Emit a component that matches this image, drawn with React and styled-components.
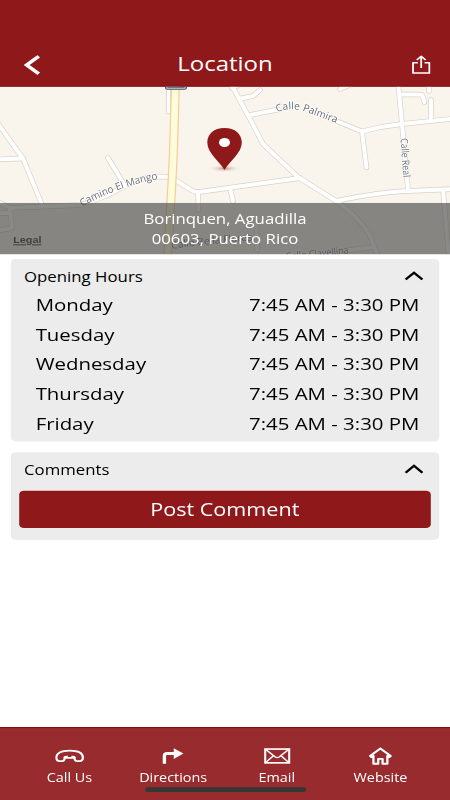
import styled, { createGlobalStyle } from "styled-components";

const hours = [
	{ day: "Monday", time: "7:45 AM - 3:30 PM" },
	{ day: "Tuesday", time: "7:45 AM - 3:30 PM" },
	{ day: "Wednesday", time: "7:45 AM - 3:30 PM" },
	{ day: "Thursday", time: "7:45 AM - 3:30 PM" },
	{ day: "Friday", time: "7:45 AM - 3:30 PM" },
];

const roads = [
	"M-4 121L23 158.5L42 205",
	"M-4 159.5L23 158.5",
	"M-4 201L10 208L80 205Q100 200 125 186Q140 178 157 176.5L172 177",
	"M108 158L125 186",
	"M-4 213.500L10 213",
	"M10 208L12 228L-4 231",
	"M172 178L191 190Q194 192.500 199 192L300 178",
	"M198 192L198.500 210",
	"M230 188L233 201",
	"M231 84L250 119L263 144L298 177L336 201Q352 212 360 222Q371 234 373 244L380 260",
	"M232 88L239 85",
	"M241 98.500L253 96L260 90",
	"M250 115L278 109.500",
	"M334 120L362 131.500Q382 126 402 124L456 118.500",
	"M362 131.500L366.500 167.500",
	"M398 82L402 124L408 190",
	"M400 94.500L420 94.500Q422 94.500 422.500 96L424.500 102",
	"M428.500 82L429 91",
	"M431 100L431 120",
	"M340 89L352 84",
	"M336 201Q380 192 408 191L456 189",
	"M443 190L449 258",
	"M256.500 222L257 250",
	"M346 250.500L374 247",
];

const Chevron = () => (
	<svg width="16" height="10" viewBox="0 0 16 10" fill="none">
		<path d="M1 8.800L8 1.800L15 8.800" stroke="#000" strokeWidth="2.100" />
	</svg>
);

const LocationMap = () => (
	<MapSvg viewBox="0 86.700 450 167.500" preserveAspectRatio="none">
		<defs>
			<path id="camino" d="M82 206.500Q120 186 158 179" />
			<path id="palmira" d="M277 112.500Q291 106.500 305 111.500L340 124.500" />
			<path id="real" d="M400.500 138.500L403.500 180" />
			<path id="bella" d="M172 249Q205 244 256 240" />
			<path id="clavellina" d="M286 260Q320 257 352 253" />
			<radialGradient id="shade">
				<stop offset="0" stopColor="#c98f87" />
				<stop offset="1" stopColor="#f9f4ec" stopOpacity="0" />
			</radialGradient>
		</defs>
		<rect y="86" width="450" height="170" fill="#f9f4ec" />
		<g fill="none" strokeLinecap="round" strokeLinejoin="round">
			<path d="M168.500 82V112" stroke="#d9d4cb" strokeWidth="4.800" />
			<path d="M168.500 82V112" stroke="#fff" strokeWidth="3.200" />
			{roads.map((d) => (
				<path key={d} d={d} stroke="#d9d3c9" strokeWidth="5.400" />
			))}
			{roads.map((d) => (
				<path key={d} d={d} stroke="#fff" strokeWidth="4" />
			))}
			<path
				d="M175.500 82L173.500 150L172 182L167.500 258"
				stroke="#f3cd9c"
				strokeWidth="9"
			/>
			<path
				d="M175.500 82L173.500 150L172 182L167.500 258"
				stroke="#fffcd9"
				strokeWidth="6.600"
			/>
		</g>
		<rect
			x="165.500"
			y="80"
			width="21"
			height="9.300"
			rx="2"
			fill="#3159c4"
			stroke="#3159c4"
			strokeWidth="1"
		/>
		<path d="M167 86V88.300H185V86" fill="none" stroke="#f2d43c" strokeWidth="1" />
		<MapLabel>
			<textPath href="#camino" textLength="81" lengthAdjust="spacingAndGlyphs">
				Camino El Mango
			</textPath>
		</MapLabel>
		<MapLabel>
			<textPath href="#palmira" textLength="62" lengthAdjust="spacingAndGlyphs">
				Calle Palmira
			</textPath>
		</MapLabel>
		<MapLabel>
			<textPath href="#real" textLength="39" lengthAdjust="spacingAndGlyphs">
				Calle Real
			</textPath>
		</MapLabel>
		<MapLabel>
			<textPath href="#bella" textLength="81" lengthAdjust="spacingAndGlyphs">
				Calle Bella Flores
			</textPath>
		</MapLabel>
		<MapLabel>
			<textPath href="#clavellina" textLength="63" lengthAdjust="spacingAndGlyphs">
				Calle Clavellina
			</textPath>
		</MapLabel>
		<ellipse cx="224.500" cy="168.500" rx="17" ry="4" fill="url(#shade)" />
		<path
			d="M224.500 170C219 160.500 207.300 153 207.300 142.500C207.300 134 214 128 224.500 128S241.800 134 241.800 142.500C241.800 153 230 160.500 224.500 170Z"
			fill="#8e181a"
		/>
		<ellipse cx="224.500" cy="142.500" rx="5.500" ry="4.600" fill="#fff" />
	</MapSvg>
);

const PhoneIcon = () => (
	<svg width="24" height="20" viewBox="0 0 24 20" fill="none">
		<path
			d="M.9 11.200C.9 6.200 5 4 12 4S23.100 6.200 23.100 11.200C23.100 13.600 22 14.500 20.300 14.500H18.300C16.700 14.500 16.200 13.400 16.200 12V10.700C15.800 10.100 15 9.900 14.400 9.900V11.200H9.600V9.900C9 9.900 8.200 10.100 7.800 10.700V12C7.800 13.400 7.300 14.500 5.700 14.500H3.700C2 14.500 .9 13.600 .9 11.200Z"
			stroke="#fff"
			strokeWidth="1.800"
		/>
	</svg>
);

const TurnIcon = () => (
	<svg width="24" height="20" viewBox="0 0 24 20">
		<path
			d="M5 17.200V9Q5 6.800 7.200 6.800H13.500"
			fill="none"
			stroke="#fff"
			strokeWidth="2.800"
		/>
		<path d="M12.800 1.500L20.800 6.900L12.800 12.300Z" fill="#fff" />
	</svg>
);

const MailIcon = () => (
	<svg width="24" height="20" viewBox="0 0 24 20" fill="none" stroke="#fff">
		<rect x="2" y="2.300" width="20" height="14" strokeWidth="1.700" />
		<path
			d="M2.500 2.800L10.400 10.400Q12 11.600 13.600 10.400L21.500 2.800M2.500 15.800L8.800 9M21.500 15.800L15.200 9"
			strokeWidth="1.400"
		/>
	</svg>
);

const HomeIcon = () => (
	<svg width="24" height="20" viewBox="0 0 24 20" fill="none">
		<path
			d="M12 1.800L3.400 9.300L4.500 10.500L6.200 9.200V17.200H10.200V12.300H13.800V17.200H17.800V9.200L19.500 10.500L20.600 9.300Z"
			stroke="#fff"
			strokeWidth="1.900"
			strokeLinejoin="round"
		/>
	</svg>
);

const tabs = [
	{ label: "Call Us", Icon: PhoneIcon },
	{ label: "Directions", Icon: TurnIcon },
	{ label: "Email", Icon: MailIcon },
	{ label: "Website", Icon: HomeIcon },
];

export default function App() {
	return (
		<Viewport>
			<GlobalStyle />
			<Screen>
				<Header>
					<svg width="14" height="20" viewBox="0 0 14 20" fill="none">
						<path d="M12.300 1.100L2.200 10L12.300 18.900" stroke="#fff" strokeWidth="3.200" />
					</svg>
					<Title>Location</Title>
					<svg width="16" height="20" viewBox="0 0 16 20" fill="none">
						<path
							d="M5.200 7.700H1.200V18H14.800V7.700H10.800M8 13V1.500M4.300 5L8 1.200L11.700 5"
							stroke="#fff"
							strokeWidth="1.500"
						/>
					</svg>
				</Header>
				<MapArea>
					<LocationMap />
					<AddressBar>
						<span>Borinquen, Aguadilla</span>
						<span>00603, Puerto Rico</span>
						<Legal>Legal</Legal>
					</AddressBar>
				</MapArea>
				<Cards>
					<Card>
						<CardHeader>
							Opening Hours
							<Chevron />
						</CardHeader>
						{hours.map(({ day, time }) => (
							<HoursRow key={day}>
								<span>{day}</span>
								<span>{time}</span>
							</HoursRow>
						))}
					</Card>
					<Card>
						<CardHeader>
							Comments
							<Chevron />
						</CardHeader>
						<PostButton>Post Comment</PostButton>
					</Card>
				</Cards>
				<TabBar>
					{tabs.map(({ label, Icon }) => (
						<Tab key={label}>
							<Icon />
							{label}
						</Tab>
					))}
					<HomeIndicator />
				</TabBar>
			</Screen>
		</Viewport>
	);
}

const GlobalStyle = createGlobalStyle`
	* {
		box-sizing: border-box;
	}
	body {
		margin: 0;
		background-color: #fff;
		font-family: "Open Sans", sans-serif;
	}
`;

const Viewport = styled.div`
	width: 450px;
	height: 800px;
	overflow: hidden;
`;

/* 375x812 layout stretched over the 450x800 viewport */
const Screen = styled.div`
	display: flex;
	flex-direction: column;
	width: 375px;
	height: 812px;
	transform: scale(1.2, 0.98522);
	transform-origin: 0 0;
`;

const Header = styled.header`
	display: flex;
	justify-content: space-between;
	align-items: center;
	height: 88px;
	padding: 44px 16px 0 20px;
	background-color: #8e181a;
	border-bottom: 1px solid #850c0e;
`;

const Title = styled.h1`
	margin: 0;
	padding: 0 2px 2px 0;
	font-size: 20px;
	font-weight: 400;
	line-height: 40px;
	color: #fff;
`;

const MapArea = styled.section`
	position: relative;
	height: 170px;
	overflow: hidden;
`;

const MapSvg = styled.svg`
	display: block;
	width: 100%;
	height: 100%;
`;

const MapLabel = styled.text`
	font-size: 10.2px;
	fill: #6c6f75;
	stroke: #fff;
	stroke-width: 1.6px;
	paint-order: stroke;
`;

const AddressBar = styled.div`
	position: absolute;
	inset: auto 0 0;
	display: flex;
	flex-direction: column;
	align-items: center;
	height: 52px;
	padding-top: 5px;
	background-color: rgba(76, 76, 73, 0.66);
	font-size: 14px;
	line-height: 21px;
	color: #fff;
`;

const Legal = styled.span`
	position: absolute;
	left: 11px;
	bottom: 8px;
	font: bold 9px/12px "Liberation Sans", sans-serif;
	color: #3f3f3d;
	text-decoration: underline;
`;

const Cards = styled.main`
	display: flex;
	flex-direction: column;
	flex: 1;
	gap: 11px;
	padding: 5px 9.5px 0 9.2px;
`;

const Card = styled.section`
	padding-bottom: 4px;
	background-color: #ececec;
	border-radius: 4px;
`;

const CardHeader = styled.div`
	display: flex;
	justify-content: space-between;
	align-items: center;
	height: 31px;
	padding: 3px 13px 0 10.8px;
	font-size: 14px;
	color: #000;
`;

const HoursRow = styled.div`
	display: flex;
	justify-content: space-between;
	align-items: center;
	height: 30px;
	padding: 0 16px 0 20.5px;
	font-size: 17px;
	color: #000;
`;

const PostButton = styled.button`
	display: block;
	width: calc(100% - 13.6px);
	height: 38px;
	margin: 7.5px 6.8px 8.5px;
	padding: 0;
	background-color: #8e181a;
	border: 0;
	border-radius: 4px;
	font: 18px "Open Sans", sans-serif;
	color: #fff;
`;

const TabBar = styled.nav`
	position: relative;
	display: flex;
	justify-content: center;
	height: 74px;
	padding-top: 19px;
	background-color: #982b2e;
	border-top: 1px solid #850c0e;
`;

const Tab = styled.div`
	display: flex;
	flex-direction: column;
	align-items: center;
	gap: 4px;
	width: 86.4px;
	font-size: 12px;
	line-height: 16px;
	color: #fff;
`;

const HomeIndicator = styled.div`
	position: absolute;
	left: 120.6px;
	bottom: 8px;
	width: 134px;
	height: 5px;
	background-color: #363636;
	border-radius: 3px;
`;
